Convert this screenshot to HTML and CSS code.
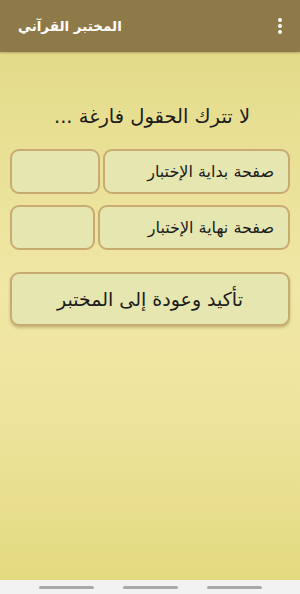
FILE: index.html
```html
<!DOCTYPE html>
<html lang="ar" dir="rtl">
<head>
    <meta charset="UTF-8">
    <meta name="viewport" content="width=device-width, initial-scale=1.0">
    <title>المختبر القرآني</title>
    <link rel="stylesheet" href="styles.css">
</head>
<body>
    <div class="app">
        <header class="toolbar">
            <h1 class="toolbar-title">المختبر القرآني</h1>
            <div class="menu">
                <span></span><span></span><span></span>
            </div>
        </header>

        <main class="content">
            <p class="hint">لا تترك الحقول فارغة ...</p>

            <div class="row">
                <div class="field-label">صفحة بداية الإختبار</div>
                <input class="field-input" type="text">
            </div>
            <div class="row row-second">
                <div class="field-label">صفحة نهاية الإختبار</div>
                <input class="field-input" type="text">
            </div>

            <button class="confirm-button">تأكيد وعودة إلى المختبر</button>
        </main>

        <nav class="nav-bar">
            <span></span><span></span><span></span>
        </nav>
    </div>
</body>
</html>
```

FILE: styles.css
```css
* {
    box-sizing: border-box;
    margin: 0;
    padding: 0;
}

body {
    width: 300px;
    height: 594px;
    font-family: "DejaVu Sans", sans-serif;
    overflow: hidden;
}

.app {
    display: flex;
    flex-direction: column;
    height: 594px;
}

/* barra do topo */
.toolbar {
    height: 52px;
    background: #8e7a48;
    display: flex;
    align-items: center;
    justify-content: space-between;
    padding: 0 14px 0 18px;
    flex-direction: row-reverse;
    box-shadow: 0 1px 2px rgba(0, 0, 0, 0.25);
    position: relative;
    z-index: 1;
}

.toolbar-title {
    color: #fff;
    font-size: 13.5px;
    font-weight: bold;
}

.menu {
    display: flex;
    flex-direction: column;
    gap: 2px;
    padding: 0 4px;
}

.menu span {
    width: 4px;
    height: 4px;
    border-radius: 50%;
    background: #fff;
}

/* conteudo */
.content {
    flex: 1;
    background: linear-gradient(180deg, #e3db89 0%, #f1e7a6 45%, #eee39c 70%, #e3da80 100%);
    padding: 52px 10px 0 10px;
}

.hint {
    text-align: center;
    font-size: 19.5px;
    line-height: 26px;
    color: #1c1c1c;
    margin-bottom: 19px;
    padding-left: 4px;
}

.row {
    display: flex;
    gap: 3px;
    height: 45px;
    margin-bottom: 11px;
}

.field-label,
.field-input,
.confirm-button {
    background: #e5e6b0;
    border: 2px solid #c9ab72;
    border-radius: 9px;
    font-family: "DejaVu Sans", sans-serif;
    color: #1c1c1c;
}

.field-label {
    flex: 0 0 187px;
    display: flex;
    align-items: center;
    padding-right: 14px;
    font-size: 16px;
}

.row-second .field-label {
    flex-basis: 192px;
}

.field-input {
    flex: 1;
    min-width: 0;
}

.confirm-button {
    width: 100%;
    height: 54px;
    margin-top: 11px;
    font-size: 19px;
    box-shadow: 0 2px 3px rgba(120, 100, 50, 0.35);
}

/* barra de navegacao */
.nav-bar {
    height: 14px;
    background: #f2f2f2;
    display: flex;
    justify-content: center;
    align-items: center;
    gap: 29px;
    direction: ltr;
}

.nav-bar span {
    width: 55px;
    height: 3px;
    border-radius: 2px;
    background: #a9a9a9;
}
```
